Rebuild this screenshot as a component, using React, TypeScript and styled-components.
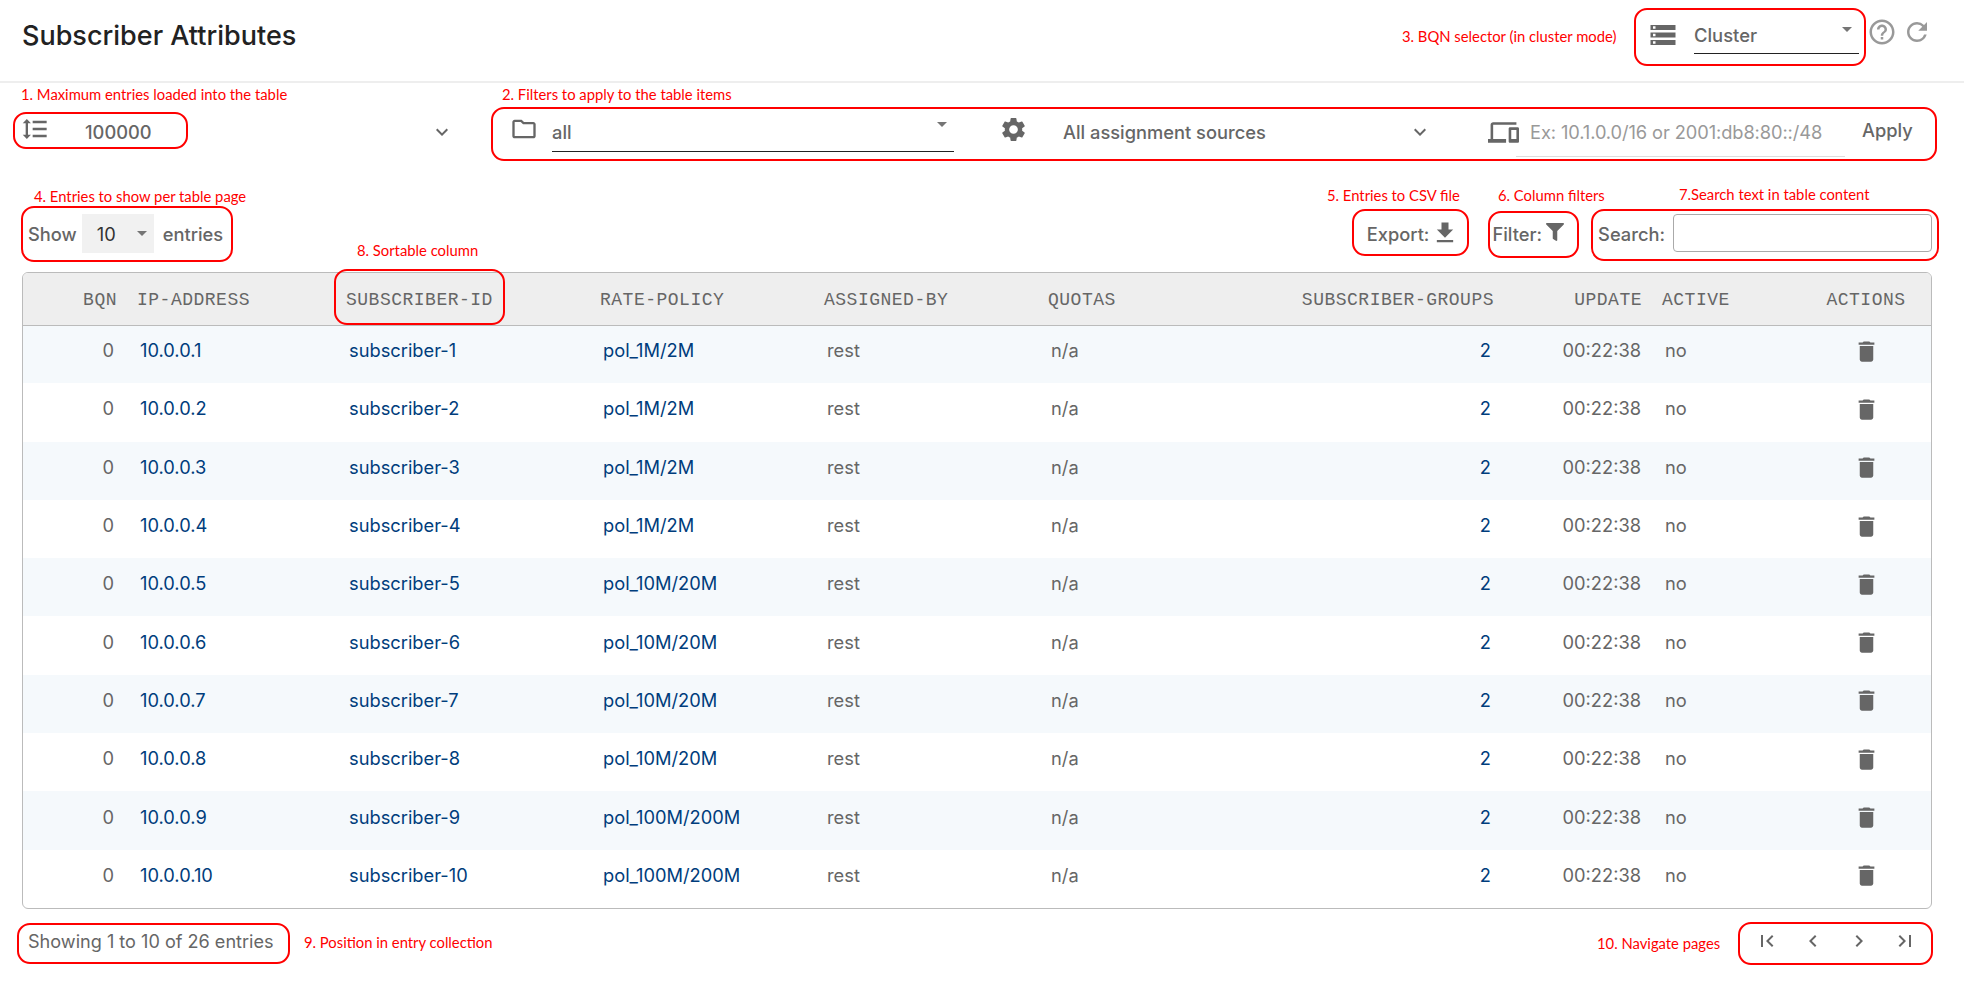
import React from 'react';
import styled, { createGlobalStyle } from 'styled-components';
import {
  MdFormatLineSpacing, MdOutlineFolder, MdSettings, MdExpandMore, MdOutlineDevices, MdStorage,
  MdHelpOutline, MdRefresh, MdFileDownload, MdDelete, MdFirstPage, MdChevronLeft, MdChevronRight, MdLastPage,
} from 'react-icons/md';
import { FaFilter } from 'react-icons/fa';

const sans = 'Inter, Roboto, "Noto Sans", "Liberation Sans", sans-serif';

const GlobalStyle = createGlobalStyle`
  html, body { margin: 0; padding: 0; background: #fff; }
  body { font-family: ${sans}; color: #666; }
`;

const Page = styled.div`
  position: relative;
  width: 1964px;
  height: 990px;
  overflow: hidden;
  background: #fff;
`;

const TopBar = styled.header`
  display: flex;
  align-items: center;
  height: 83px;
  box-sizing: border-box;
  border-bottom: 2px solid #eee;
  padding: 0 32px 13px 22px;
`;
const Title = styled.h1`
  margin: 2px 0 0;
  flex: 1;
  font-size: 27px;
  font-weight: 500;
  color: #222;
`;
const ClusterSelect = styled.div`
  position: relative;
  display: flex;
  align-items: center;
  align-self: flex-start;
  width: 165px;
  height: 36px;
  margin: 18px 8px 0 16px;
  padding-bottom: 2px;
  box-sizing: border-box;
  border-bottom: 1px solid #222;
  font-size: 18.4px;
  font-weight: 500;
  color: #666;
`;
const IconSlot = styled.span<{ $size: number; $color?: string; $up?: number }>`
  display: inline-flex;
  flex: none;
  align-items: center;
  justify-content: center;
  width: ${p => p.$size}px;
  height: ${p => p.$size}px;
  font-size: ${p => p.$size}px;
  color: ${p => p.$color ?? '#666'};
  transform: translateY(${p => -(p.$up ?? 0)}px);
`;
const Caret = styled.span`
  position: absolute;
  right: 7px;
  top: 9px;
  width: 0;
  height: 0;
  border-left: 5px solid transparent;
  border-right: 5px solid transparent;
  border-top: 5px solid #757575;
`;
const HeadIcons = styled.div`
  display: flex;
  align-items: center;
  gap: 5px;
  margin-bottom: 4px;
`;

const FilterBar = styled.div`
  display: flex;
  align-items: center;
  height: 99px;
  padding: 0 0 1px 21px;
  box-sizing: border-box;
`;
const MaxEntries = styled.div`
  display: flex;
  align-items: center;
  width: 433px;
  font-size: 18.3px;
  font-weight: 500;
  color: #666;
`;
const MaxValue = styled.span`
  flex: 1;
  margin-left: 36px;
`;
const SourceFilter = styled.div`
  display: flex;
  align-items: center;
  width: 470px;
  margin-left: 56px;
`;
const SelectField = styled.div`
  position: relative;
  display: flex;
  align-items: center;
  width: 402px;
  height: 38px;
  margin-left: 14px;
  margin-top: 1px;
  border-bottom: 1px solid #222;
  font-size: 18.3px;
  font-weight: 500;
`;
const GearWrap = styled.div`
  margin-left: 19px;
  display: flex;
`;
const SourceSelect = styled.div`
  display: flex;
  align-items: center;
  justify-content: space-between;
  width: 369px;
  margin-left: 35px;
  font-size: 18.3px;
  font-weight: 500;
`;
const IpFilter = styled.div`
  display: flex;
  align-items: center;
  margin-left: 56px;
`;
const IpField = styled.div`
  width: 329px;
  height: 50px;
  margin-left: -3px;
  padding: 14px 0 0 14px;
  box-sizing: border-box;
  border-bottom: 1px solid #ddd;
  font-size: 18.3px;
  font-weight: 400;
  letter-spacing: -.1px;
  color: #999;
  white-space: nowrap;
`;
const Apply = styled.button`
  margin: -4px 0 0 17px;
  padding: 0;
  border: 0;
  background: none;
  font: 500 18.3px ${sans};
  color: #666;
`;

const Toolbar = styled.div`
  display: flex;
  align-items: center;
  height: 90px;
  box-sizing: border-box;
  padding: 14px 0 0 28px;
  font-size: 18.3px;
  font-weight: 500;
  color: #666;
`;
const ShowGroup = styled.div`
  display: flex;
  align-items: center;
  flex: 1;
`;
const PageSize = styled.div`
  position: relative;
  display: flex;
  align-items: center;
  width: 72px;
  height: 39px;
  margin: -1px 9px 0 5px;
  padding-left: 15px;
  box-sizing: border-box;
  background: #f1f1f1;
  font-weight: 400;
  color: #333;
`;
const SizeCaret = styled(Caret)`
  right: 7px;
  top: 17px;
`;
const ToolItem = styled.div<{ $gap: number; $after: number }>`
  display: flex;
  align-items: center;
  gap: ${p => p.$gap}px;
  margin-right: ${p => p.$after}px;
`;
const SearchInput = styled.div`
  width: 259px;
  height: 38px;
  margin: -2px 32px 0 8px;
  box-sizing: border-box;
  border: 1px solid #aaa;
  border-radius: 4px;
  background: #fff;
`;

const TableFrame = styled.div`
  margin: 0 32px 0 22px;
  border: 1px solid #bbb;
  border-radius: 6px;
  overflow: hidden;
`;
const Table = styled.table`
  width: 1909px;
  border-collapse: collapse;
  table-layout: fixed;
`;
const Th = styled.th<{ $align?: string; $w: number }>`
  width: ${p => p.$w}px;
  height: 52px;
  padding: 3px 10px 0;
  box-sizing: border-box;
  background: #eee;
  border-bottom: 1px solid #bbb;
  font: 400 18px "Liberation Mono", "DejaVu Sans Mono", monospace;
  letter-spacing: .5px;
  color: #666;
  text-align: ${p => p.$align ?? 'left'};
  white-space: nowrap;
`;
const Row = styled.tr`
  height: 58.3px;
  &:nth-child(odd) td { background: #f5f9fc; }
`;
const Td = styled.td<{ $align?: string; $link?: boolean }>`
  padding: 0 13px 8px;
  box-sizing: border-box;
  font-size: 18.3px;
  font-weight: 400;
  color: ${p => (p.$link ? '#003d7c' : '#666')};
  text-align: ${p => p.$align ?? 'left'};
  white-space: nowrap;
`;
const TimeTd = styled(Td)`
  padding-right: 11px;
`;
const ActionTd = styled(Td)`
  padding: 0 0 6px;
  line-height: 0;
`;

const Footer = styled.div`
  display: flex;
  align-items: center;
  justify-content: space-between;
  height: 68px;
  box-sizing: border-box;
  padding: 0 32px 4px 28px;
  font-size: 18.1px;
  color: #666;
`;
const Pager = styled.div`
  display: flex;
  gap: 22px;
  margin-right: 15px;
`;

const Callout = styled.div<{ $x: number; $y: number; $w: number; $h: number }>`
  position: absolute;
  left: ${p => p.$x}px;
  top: ${p => p.$y}px;
  width: ${p => p.$w}px;
  height: ${p => p.$h}px;
  box-sizing: border-box;
  border: 2px solid #f00;
  border-radius: 13px;
  pointer-events: none;
`;
const Note = styled.div<{ $x: number; $y: number }>`
  position: absolute;
  left: ${p => p.$x}px;
  top: ${p => p.$y}px;
  font: 400 14.8px Lato, "Open Sans", sans-serif;
  line-height: 16px;
  color: #f00;
  white-space: nowrap;
`;

const policies = ['pol_1M/2M', 'pol_1M/2M', 'pol_1M/2M', 'pol_1M/2M', 'pol_10M/20M', 'pol_10M/20M', 'pol_10M/20M', 'pol_10M/20M', 'pol_100M/200M', 'pol_100M/200M'];

const notes: [number, number, string][] = [
  [21, 86, '1. Maximum entries loaded into the table'],
  [502, 86, '2. Filters to apply to the table items'],
  [1402, 28, '3. BQN selector (in cluster mode)'],
  [34, 188, '4. Entries to show per table page'],
  [1327, 187, '5. Entries to CSV file'],
  [1498, 187, '6. Column filters'],
  [1679, 186, '7.Search text in table content'],
  [357, 242, '8. Sortable column'],
  [304, 934, '9. Position in entry collection'],
  [1597, 935, '10. Navigate pages'],
];
const callouts: [number, number, number, number][] = [
  [13, 112, 175, 37],
  [491, 107, 1446, 54],
  [1634, 8, 232, 58],
  [21, 206, 212, 56],
  [1352, 209, 117, 47],
  [1488, 211, 91, 47],
  [1591, 209, 348, 52],
  [334, 269, 171, 56],
  [17, 923, 273, 41],
  [1738, 922, 195, 43],
];

export default function App() {
  return (
    <Page>
      <GlobalStyle />
      <TopBar>
        <Title>Subscriber Attributes</Title>
        <IconSlot $size={30} $up={-1}><MdStorage /></IconSlot>
        <ClusterSelect>Cluster<Caret /></ClusterSelect>
        <HeadIcons>
          <IconSlot $size={30} $color="#999"><MdHelpOutline /></IconSlot>
          <IconSlot $size={30} $color="#999"><MdRefresh /></IconSlot>
        </HeadIcons>
      </TopBar>
      <FilterBar>
        <MaxEntries>
          <IconSlot $size={28} $up={3}><MdFormatLineSpacing /></IconSlot>
          <MaxValue>100000</MaxValue>
          <IconSlot $size={24}><MdExpandMore /></IconSlot>
        </MaxEntries>
        <SourceFilter>
          <IconSlot $size={28} $up={3}><MdOutlineFolder /></IconSlot>
          <SelectField>all<Caret /></SelectField>
        </SourceFilter>
        <GearWrap><IconSlot $size={29} $up={3}><MdSettings /></IconSlot></GearWrap>
        <SourceSelect>All assignment sources<IconSlot $size={24}><MdExpandMore /></IconSlot></SourceSelect>
        <IpFilter>
          <IconSlot $size={31}><MdOutlineDevices /></IconSlot>
          <IpField>Ex: 10.1.0.0/16 or 2001:db8:80::/48</IpField>
        </IpFilter>
        <Apply>Apply</Apply>
      </FilterBar>
      <Toolbar>
        <ShowGroup>Show<PageSize>10<SizeCaret /></PageSize>entries</ShowGroup>
        <ToolItem $gap={2} $after={33}>Export: <IconSlot $size={28} $up={1}><MdFileDownload /></IconSlot></ToolItem>
        <ToolItem $gap={4} $after={34}>Filter: <IconSlot $size={18} $up={2}><FaFilter /></IconSlot></ToolItem>
        <ToolItem $gap={0} $after={0}>Search:<SearchInput /></ToolItem>
      </Toolbar>
      <TableFrame>
        <Table>
          <thead>
            <tr>
              <Th $w={104} $align="right">BQN</Th>
              <Th $w={209}>IP-ADDRESS</Th>
              <Th $w={254}>SUBSCRIBER-ID</Th>
              <Th $w={224}>RATE-POLICY</Th>
              <Th $w={224}>ASSIGNED-BY</Th>
              <Th $w={212}>QUOTAS</Th>
              <Th $w={254} $align="right">SUBSCRIBER-GROUPS</Th>
              <Th $w={148} $align="right">UPDATE</Th>
              <Th $w={148}>ACTIVE</Th>
              <Th $w={132} $align="center">ACTIONS</Th>
            </tr>
          </thead>
          <tbody>
            {policies.map((pol, i) => (
              <Row key={i}>
                <Td $align="right">0</Td>
                <Td $link>{`10.0.0.${i + 1}`}</Td>
                <Td $link>{`subscriber-${i + 1}`}</Td>
                <Td $link>{pol}</Td>
                <Td>rest</Td>
                <Td>n/a</Td>
                <Td $link $align="right">2</Td>
                <TimeTd $align="right">00:22:38</TimeTd>
                <Td>no</Td>
                <ActionTd $align="center"><IconSlot $size={27}><MdDelete /></IconSlot></ActionTd>
              </Row>
            ))}
          </tbody>
        </Table>
      </TableFrame>
      <Footer>
        <span>Showing 1 to 10 of 26 entries</span>
        <Pager>
          <IconSlot $size={24}><MdFirstPage /></IconSlot>
          <IconSlot $size={24}><MdChevronLeft /></IconSlot>
          <IconSlot $size={24}><MdChevronRight /></IconSlot>
          <IconSlot $size={24}><MdLastPage /></IconSlot>
        </Pager>
      </Footer>
      {callouts.map(([x, y, w, h], i) => <Callout key={i} $x={x} $y={y} $w={w} $h={h} />)}
      {notes.map(([x, y, t]) => <Note key={t} $x={x} $y={y}>{t}</Note>)}
    </Page>
  );
}
